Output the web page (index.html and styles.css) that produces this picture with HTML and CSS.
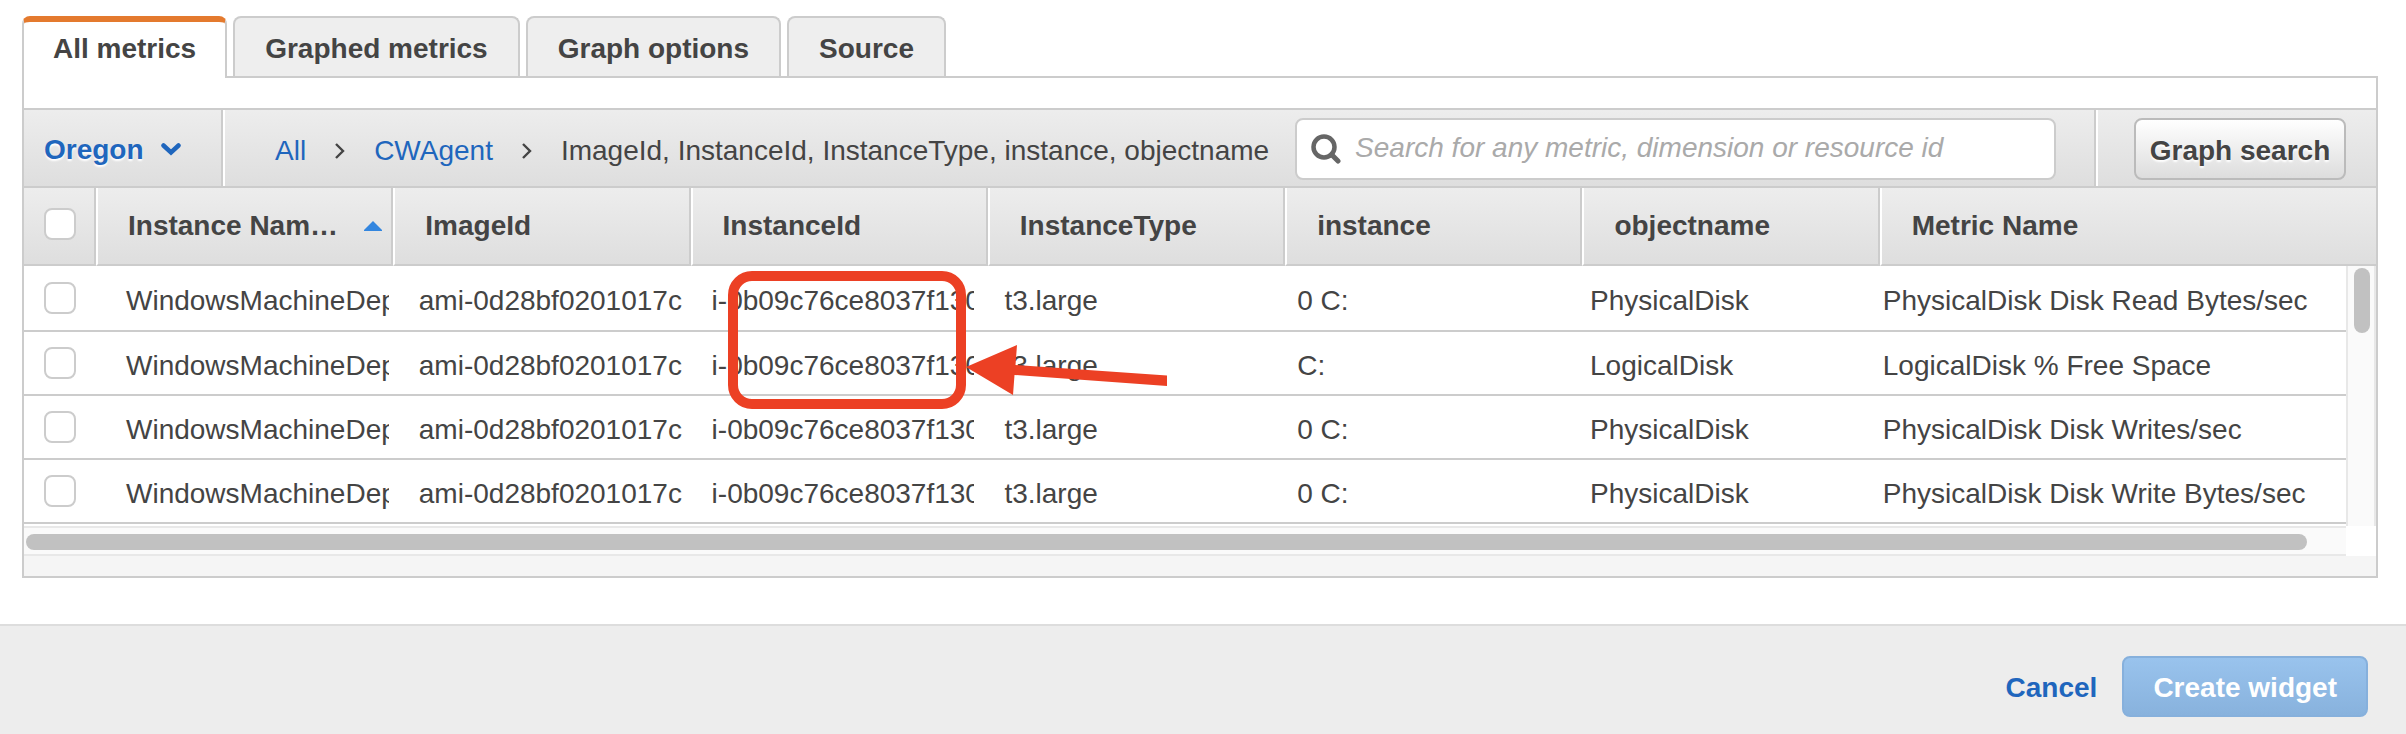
FILE: index.html
```html
<!DOCTYPE html>
<html lang="en">
<head>
<meta charset="utf-8">
<title>Add metric graph</title>
<link rel="stylesheet" href="styles.css">
</head>
<body>
<main class="content">
  <div class="tabs" role="tablist">
    <button class="tab tab-active" role="tab" aria-selected="true">All metrics</button>
    <button class="tab" role="tab" aria-selected="false">Graphed metrics</button>
    <button class="tab" role="tab" aria-selected="false">Graph options</button>
    <button class="tab" role="tab" aria-selected="false">Source</button>
  </div>
  <section class="panel">
    <div class="toolbar">
      <button class="region">Oregon
        <svg width="20" height="14" viewBox="0 0 20 14" aria-hidden="true"><path d="M2.5 2.5 L10 9.5 L17.5 2.5" fill="none" stroke="#1f66bd" stroke-width="4.500" stroke-linecap="round"/></svg>
      </button>
      <nav class="crumbs" aria-label="Metric path">
        <a href="#all">All</a>
        <svg width="10" height="16" viewBox="0 0 10 16" aria-hidden="true"><path d="M1 1 L8 8 L1 15" fill="none" stroke="#444" stroke-width="2.4"/></svg>
        <a href="#cwagent">CWAgent</a>
        <svg width="10" height="16" viewBox="0 0 10 16" aria-hidden="true"><path d="M1 1 L8 8 L1 15" fill="none" stroke="#444" stroke-width="2.4"/></svg>
        <span>ImageId, InstanceId, InstanceType, instance, objectname</span>
      </nav>
      <label class="search">
        <svg width="30" height="30" viewBox="0 0 30 30" aria-hidden="true"><circle cx="13" cy="13" r="10.5" fill="none" stroke="#666" stroke-width="4.500"/><path d="M20.5 20.5 L27 27" stroke="#666" stroke-width="5" stroke-linecap="round"/></svg>
        <input type="text" placeholder="Search for any metric, dimension or resource id" aria-label="Search for any metric, dimension or resource id">
      </label>
      <div class="actions"><button class="graph-search">Graph search</button></div>
    </div>
    <table class="grid head">
      <colgroup><col class="c-check"><col class="c-head" span="6"><col></colgroup>
      <thead><tr>
        <th class="check"><input type="checkbox" aria-label="Select all"></th>
        <th><span class="sort">Instance Nam…<svg width="18" height="11" viewBox="0 0 18 11" aria-hidden="true"><path d="M9 0 L18 9 V10 H0 V9 Z" fill="#3386df"/></svg></span></th>
        <th>ImageId</th><th>InstanceId</th><th>InstanceType</th><th>instance</th><th>objectname</th><th>Metric Name</th>
      </tr></thead>
    </table>
    <div class="viewport">
      <table class="grid rows">
        <colgroup><col class="c-check"><col class="c-body" span="6"><col></colgroup>
        <tbody>
          <tr><td class="check"><input type="checkbox" aria-label="Select row 1"></td><td>WindowsMachineDep</td><td>ami-0d28bf0201017c</td><td>i-0b09c76ce8037f130</td><td>t3.large</td><td>0 C:</td><td>PhysicalDisk</td><td>PhysicalDisk Disk Read Bytes/sec</td></tr>
          <tr><td class="check"><input type="checkbox" aria-label="Select row 2"></td><td>WindowsMachineDep</td><td>ami-0d28bf0201017c</td><td>i-0b09c76ce8037f130</td><td>t3.large</td><td>C:</td><td>LogicalDisk</td><td>LogicalDisk % Free Space</td></tr>
          <tr><td class="check"><input type="checkbox" aria-label="Select row 3"></td><td>WindowsMachineDep</td><td>ami-0d28bf0201017c</td><td>i-0b09c76ce8037f130</td><td>t3.large</td><td>0 C:</td><td>PhysicalDisk</td><td>PhysicalDisk Disk Writes/sec</td></tr>
          <tr><td class="check"><input type="checkbox" aria-label="Select row 4"></td><td>WindowsMachineDep</td><td>ami-0d28bf0201017c</td><td>i-0b09c76ce8037f130</td><td>t3.large</td><td>0 C:</td><td>PhysicalDisk</td><td>PhysicalDisk Disk Write Bytes/sec</td></tr>
        </tbody>
      </table>
      <div class="vbar"><div class="vthumb"></div></div>
      <div class="hbar"><div class="hthumb"></div></div>
      <div class="corner"></div>
    </div>
    <div class="strip"></div>
    <svg class="callout" width="444" height="142" viewBox="726 269 444 142" aria-hidden="true">
      <rect x="733" y="276" width="228" height="128" rx="19" fill="none" stroke="#ec4024" stroke-width="10"/>
      <path d="M966 367 L1017 345 L1015.500 365 L1167 375.500 L1167 386 L1014.500 375 L1013 395 Z" fill="#ec4024"/>
    </svg>
  </section>
</main>
<footer class="footer">
  <a class="cancel" href="#cancel">Cancel</a>
  <button class="create">Create widget</button>
</footer>
</body>
</html>
```
FILE: styles.css
```css
* { box-sizing: border-box; }
body {
  margin: 0;
  min-height: 100vh;
  display: flex;
  flex-direction: column;
  background: #fff;
  color: #444;
  font: 28px/32px "Liberation Sans", Arial, sans-serif;
}
button, input { font: inherit; color: inherit; margin: 0; }
a { color: #1f66bd; text-decoration: none; }
svg { flex: none; display: block; }

.content { padding: 16px 28px 46px 22px; }
.tabs { display: flex; gap: 6px; }
.tab {
  height: 60px;
  padding: 4px 30px 0;
  border: 2px solid #ccc;
  border-bottom: 0;
  border-radius: 8px 8px 0 0;
  background: #eee;
  font-weight: bold;
}
.tab-active {
  position: relative;
  z-index: 1;
  height: 62px;
  margin-bottom: -2px;
  padding: 0 29px 2px;
  border-top: 6px solid #e47a2e;
  background: #fff;
}

.panel {
  position: relative;
  padding-top: 30px;
  border: 2px solid #ccc;
}
.toolbar {
  display: flex;
  height: 80px;
  border: solid #ccc;
  border-width: 2px 0;
  background: linear-gradient(#ededed, #dedede);
}
.region {
  display: flex;
  align-items: center;
  gap: 17px;
  width: 199px;
  padding: 4px 0 0 20px;
  border: 0;
  border-right: 2px solid #ccc;
  background: none;
  color: #1f66bd;
  font-weight: bold;
  text-shadow: 0 2px 2px #fff;
}
.crumbs {
  display: flex;
  align-items: center;
  gap: 29px;
  padding: 5px 26px 0 50px;
  border-left: 2px solid #fff;
  white-space: nowrap;
}
.search {
  flex: 1;
  display: flex;
  align-items: center;
  gap: 14px;
  height: 62px;
  margin: 8px 38px 0 0;
  padding: 0 14px;
  border: 2px solid #ccc;
  border-radius: 8px;
  background: #fff;
}
.search input {
  flex: 1;
  min-width: 0;
  padding: 0 0 2px;
  border: 0;
  outline: 0;
  background: none;
}
.search input::placeholder { color: #aaa; font-style: italic; opacity: 1; }
.actions {
  padding: 8px 30px 0 38px;
  border-left: 2px solid #ccc;
  box-shadow: inset 2px 0 #fff;
}
.graph-search {
  height: 62px;
  width: 212px;
  padding: 4px 0 0;
  border: 2px solid #bbb;
  border-radius: 8px;
  background: linear-gradient(#fff, #ddd);
  font-weight: bold;
  text-shadow: 0 2px 2px #fff;
}

.grid { width: 100%; border-collapse: separate; border-spacing: 0; table-layout: fixed; }
.c-check { width: 72px; }
.c-head { width: 12.64%; }
.c-body { width: 12.61%; }
.grid th {
  height: 78px;
  padding: 0 9px 0 30px;
  border-bottom: 2px solid #ccc;
  border-right: 2px solid #ccc;
  border-left: 2px solid #fff;
  background: linear-gradient(#ededed, #dedede);
  text-align: left;
  white-space: nowrap;
}
.grid th:last-child { border-right: 0; }
.grid th.check { padding: 0 0 4px 20px; border-left: 0; }
.sort { display: flex; align-items: center; justify-content: space-between; }
.grid td {
  height: 64px;
  padding: 6px 0 0 30px;
  border-bottom: 2px solid #ccc;
  overflow: hidden;
  white-space: nowrap;
}
.grid td.check { padding: 0 0 0 20px; }
.grid tr:first-child td { height: 66px; }
.grid input {
  appearance: none;
  display: block;
  width: 32px;
  height: 32px;
  border: 2px solid #ccc;
  border-radius: 8px;
  background: #fff;
}

.viewport { display: grid; grid-template-columns: 1fr 30px; grid-template-rows: auto 30px; }
.rows { margin-bottom: 2px; }
.vbar { padding: 2px 6px; border: solid #e8e8e8; border-width: 0 2px; background: #fafafa; }
.vthumb { width: 16px; height: 65px; border-radius: 8px; background: #c1c1c1; }
.hbar { padding: 6px 2px; border: solid #e8e8e8; border-width: 2px 0; background: #fafafa; }
.hthumb { width: 98.4%; height: 16px; border-radius: 8px; background: #c1c1c1; }
.strip { height: 20px; background: #f5f5f5; }
.callout { position: absolute; left: 702px; top: 191px; }

.footer {
  flex: 1;
  display: flex;
  align-items: flex-start;
  justify-content: flex-end;
  gap: 25px;
  padding: 30px 38px 16px;
  border-top: 2px solid #ddd;
  background: #ededed;
  font-weight: bold;
}
.cancel { padding: 16px 0 12px; }
.create {
  height: 61px;
  padding: 2px 29px 0;
  border: 2px solid #86b0dc;
  border-radius: 8px;
  background: linear-gradient(#99c3ed, #88b2dd);
  color: #fff;
  font-weight: bold;
}
```
